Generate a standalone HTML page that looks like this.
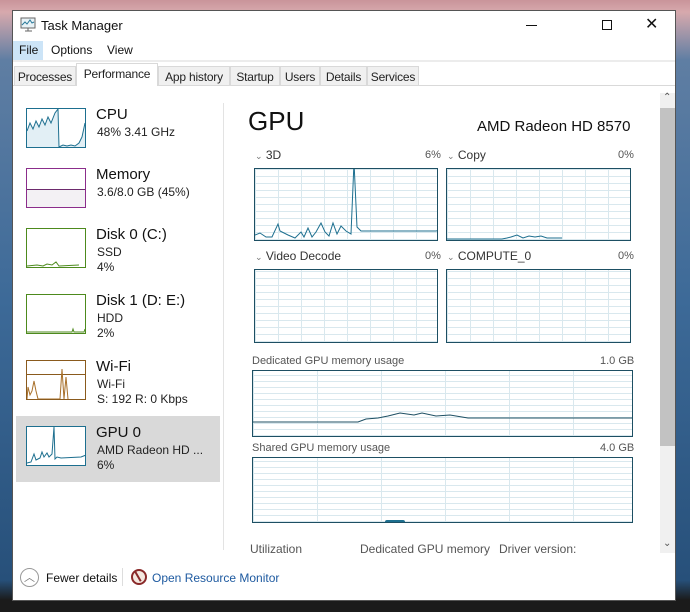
<!DOCTYPE html><html><head><style>
*{margin:0;padding:0;box-sizing:border-box}
body{width:690px;height:612px;overflow:hidden;position:relative;font-family:"Liberation Sans",sans-serif;background:linear-gradient(180deg,#c9949a 0,#d7a9ad 12px,#5f7ea3 60px,#3d6a98 300px,#27507a 580px,#1b1b1b 600px)}
.a{position:absolute;white-space:nowrap}
#w{position:absolute;left:12px;top:10px;width:664px;height:591px;background:#fff;border:1px solid #555}
.g{position:absolute;border:1px solid #1d4f63;background-color:#fff;background-image:repeating-linear-gradient(90deg,#d9e8ee 0 1px,transparent 1px 23px),repeating-linear-gradient(0deg,#d9e8ee 0 1px,transparent 1px 7px)}
.t{position:absolute;top:66px;height:20px;background:#f0f0f0;border:1px solid #d9d9d9;font-size:12px;padding:3px 0 0;text-align:center;color:#222;white-space:nowrap;overflow:hidden;letter-spacing:-0.2px}
.s{font-size:11px;color:#555}
.th{position:absolute;left:26px;width:60px;height:40px;border:1px solid}
</style></head><body>
<div id="w"></div>
<svg class="a" style="left:20px;top:17px" width="17" height="16" viewBox="0 0 17 16"><rect x="1" y="1" width="14" height="10" fill="#e8f2f6" stroke="#666"/><path d="M2 8l3-3 2 2 3-4 2 3 2-1" fill="none" stroke="#2a7a9a"/><path d="M5 14h7M8 11v3" stroke="#666"/></svg>
<div class="a" style="left:41px;top:18px;font-size:13px;color:#111">Task Manager</div>
<div class="a" style="left:526px;top:25px;width:11px;height:1px;background:#111"></div>
<div class="a" style="left:602px;top:20px;width:10px;height:10px;border:1px solid #111"></div>
<div class="a" style="left:645px;top:14px;font-size:16px;color:#111">✕</div>
<div class="a" style="left:13px;top:41px;width:30px;height:19px;background:#cce4f7"></div>
<div class="a" style="left:19px;top:43px;font-size:12px;color:#111">File</div>
<div class="a" style="left:51px;top:43px;font-size:12px;color:#111">Options</div>
<div class="a" style="left:107px;top:43px;font-size:12px;color:#111">View</div>
<div class="a" style="left:13px;top:60px;width:662px;height:2px;background:#ececec"></div>
<div class="a" style="left:13px;top:85px;width:662px;height:1px;background:#d9d9d9"></div>
<div class="t" style="left:14px;width:62px">Processes</div>
<div class="t" style="left:76px;top:63px;height:23px;width:82px;background:#fff;border-bottom:none;padding-top:3px">Performance</div>
<div class="t" style="left:158px;width:72px">App history</div>
<div class="t" style="left:230px;width:50px">Startup</div>
<div class="t" style="left:280px;width:40px">Users</div>
<div class="t" style="left:320px;width:47px">Details</div>
<div class="t" style="left:367px;width:52px">Services</div>

<div class="a" style="left:223px;top:103px;width:1px;height:447px;background:#e3e3e3"></div>
<div class="a" style="left:16px;top:416px;width:204px;height:66px;background:#d9d9d9"></div>

<div class="th" style="top:108px;border-color:#1d6f8f;background:#fff"><svg width="58" height="38"><path d="M0 22L3 14 6 20 9 12 12 18 15 10 18 16 21 8 24 14 28 4 31 0 32 38 36 36 40 37 44 36 48 37 52 34 55 28 58 14V38H0z" fill="#e2eff5"/><path d="M0 22L3 14 6 20 9 12 12 18 15 10 18 16 21 8 24 14 28 4 31 0 32 38 36 36 40 37 44 36 48 37 52 34 55 28 58 14" fill="none" stroke="#1d6f8f"/></svg></div>
<div class="a" style="left:96px;top:106px;font-size:15px;color:#111">CPU</div>
<div class="a" style="left:97px;top:125px;font-size:12px;color:#222">48% 3.41 GHz</div>

<div class="th" style="top:168px;border-color:#8b2d8b;background:#fff"><div style="position:absolute;left:0;right:0;top:20px;bottom:0;background:#f3f1f4;border-top:1px solid #6d2a6d"></div></div>
<div class="a" style="left:96px;top:166px;font-size:15px;color:#111">Memory</div>
<div class="a" style="left:97px;top:185px;font-size:12px;color:#222">3.6/8.0 GB (45%)</div>

<div class="th" style="top:228px;border-color:#4d8a1d"><svg width="58" height="38"><path d="M0 37l10-1 6 1 4-2 5 1 4-3 3 4 20-1" fill="none" stroke="#4d8a1d"/></svg></div>
<div class="a" style="left:96px;top:226px;font-size:15px;color:#111">Disk 0 (C:)</div>
<div class="a" style="left:97px;top:245px;font-size:12px;color:#222">SSD</div>
<div class="a" style="left:97px;top:260px;font-size:12px;color:#222">4%</div>

<div class="th" style="top:294px;border-color:#4d8a1d"><svg width="58" height="38"><path d="M0 37h45l1-3 1 3h10l1-3" fill="none" stroke="#4d8a1d"/></svg></div>
<div class="a" style="left:96px;top:292px;font-size:15px;color:#111">Disk 1 (D: E:)</div>
<div class="a" style="left:97px;top:311px;font-size:12px;color:#222">HDD</div>
<div class="a" style="left:97px;top:326px;font-size:12px;color:#222">2%</div>

<div class="th" style="top:360px;border-color:#8a5a1d"><div style="position:absolute;left:0;right:0;top:13px;height:1px;background:#8a5a1d"></div><svg width="58" height="38" style="position:absolute"><path d="M0 38l1-12 2 8 2-4 2-10 2 10 2 8 2 0h20l2-30 2 30 2-22 2 22" fill="none" stroke="#a8702a"/></svg></div>
<div class="a" style="left:96px;top:358px;font-size:15px;color:#111">Wi-Fi</div>
<div class="a" style="left:97px;top:377px;font-size:12px;color:#222">Wi-Fi</div>
<div class="a" style="left:97px;top:392px;font-size:12px;color:#222">S: 192 R: 0 Kbps</div>

<div class="th" style="top:426px;border-color:#1d6f8f;background:#fff"><svg width="58" height="38"><path d="M0 36l4-1 3-8 2 6 4-2 2-6 2 5 3-4 2 4 3-3 2-27 1 32 2-2 4 1 20-1 5-2" fill="none" stroke="#1d6f8f"/></svg></div>
<div class="a" style="left:96px;top:424px;font-size:15px;color:#111">GPU 0</div>
<div class="a" style="left:97px;top:443px;font-size:12px;color:#222">AMD Radeon HD ...</div>
<div class="a" style="left:97px;top:458px;font-size:12px;color:#222">6%</div>

<div class="a" style="left:248px;top:106px;font-size:26px;color:#111">GPU</div>
<div class="a" style="left:477px;top:118px;font-size:15px;color:#111">AMD Radeon HD 8570</div>

<div class="a" style="left:255px;top:148px;font-size:12px;color:#333"><span style="font-size:9px;color:#777">⌄</span> 3D</div>
<div class="a s" style="left:425px;top:149px">6%</div>
<div class="a" style="left:447px;top:148px;font-size:12px;color:#333"><span style="font-size:9px;color:#777">⌄</span> Copy</div>
<div class="a s" style="left:618px;top:149px">0%</div>
<div class="g" style="left:254px;top:168px;width:184px;height:73px"><svg width="182" height="71" style="position:absolute"><path d="M0 66l5-2 6 4 6 0 6-13 2 7 8 4 7 3 6-6 3 5 4-9 4 9 4-5 5-9 4 9 4 4 4-13 4 11 4-8 5 5 5 3 3-72 3 65 4 4 55 0 20 0 10-2 5 2 6-3 5 1 5-3" fill="none" stroke="#1d6f8f"/></svg></div>
<div class="g" style="left:446px;top:168px;width:185px;height:73px"><svg width="183" height="71" style="position:absolute"><path d="M0 70h55l5-1 4-1 6-2 6 3 6-2 6 1 6-1 6 2 15 0" fill="none" stroke="#1d6f8f"/></svg></div>

<div class="a" style="left:255px;top:249px;font-size:12px;color:#333"><span style="font-size:9px;color:#777">⌄</span> Video Decode</div>
<div class="a s" style="left:425px;top:250px">0%</div>
<div class="a" style="left:447px;top:249px;font-size:12px;color:#333"><span style="font-size:9px;color:#777">⌄</span> COMPUTE_0</div>
<div class="a s" style="left:618px;top:250px">0%</div>
<div class="g" style="left:254px;top:269px;width:184px;height:74px"></div>
<div class="g" style="left:446px;top:269px;width:185px;height:74px"></div>

<div class="a s" style="left:252px;top:355px">Dedicated GPU memory usage</div>
<div class="a s" style="left:600px;top:355px">1.0 GB</div>
<div class="g" style="left:252px;top:370px;width:381px;height:67px;background-image:repeating-linear-gradient(90deg,#d9e8ee 0 1px,transparent 1px 64px),repeating-linear-gradient(0deg,#d9e8ee 0 1px,transparent 1px 6px)"><svg width="379" height="65" style="position:absolute"><path d="M0 51h105l8-3 12-1 10-2 12-3 14 2 8-2 14 3 14-1 18 3 180 0 8-2 10 1 10-1 6 1" fill="none" stroke="#1d4f63"/></svg></div>

<div class="a s" style="left:252px;top:442px">Shared GPU memory usage</div>
<div class="a s" style="left:600px;top:442px">4.0 GB</div>
<div class="g" style="left:252px;top:457px;width:381px;height:66px;background-image:repeating-linear-gradient(90deg,#d9e8ee 0 1px,transparent 1px 64px),repeating-linear-gradient(0deg,#d9e8ee 0 1px,transparent 1px 6px)"><div style="position:absolute;left:132px;bottom:0;width:20px;height:2px;background:#1d6f8f;border-radius:2px 2px 0 0"></div></div>

<div class="a" style="left:250px;top:542px;font-size:12px;color:#555">Utilization</div>
<div class="a" style="left:360px;top:542px;font-size:12px;color:#555">Dedicated GPU memory</div>
<div class="a" style="left:499px;top:542px;font-size:12px;color:#555">Driver version:</div>

<div class="a" style="left:660px;top:93px;width:15px;height:460px;background:#f0f0f0"></div>
<div class="a" style="left:660px;top:108px;width:15px;height:338px;background:#c2c2c2"></div>
<div class="a" style="left:663px;top:92px;font-size:10px;color:#555">⌃</div>
<div class="a" style="left:663px;top:538px;font-size:10px;color:#555">⌄</div>

<div class="a" style="left:20px;top:568px;width:19px;height:19px;border:1px solid #999;border-radius:50%;text-align:center;font-size:11px;line-height:18px;color:#777">︿</div>
<div class="a" style="left:46px;top:571px;font-size:12px;color:#111">Fewer details</div>
<div class="a" style="left:122px;top:568px;width:1px;height:18px;background:#ddd"></div>
<div class="a" style="left:131px;top:569px;width:16px;height:16px;border:2px solid #8a2a2a;border-radius:50%;background:#f4e8e0"></div>
<div class="a" style="left:137px;top:571px;width:2px;height:11px;background:#8a2a2a;transform:rotate(-30deg)"></div>
<div class="a" style="left:152px;top:571px;font-size:12px;color:#1e5aa0">Open Resource Monitor</div>
</body></html>
